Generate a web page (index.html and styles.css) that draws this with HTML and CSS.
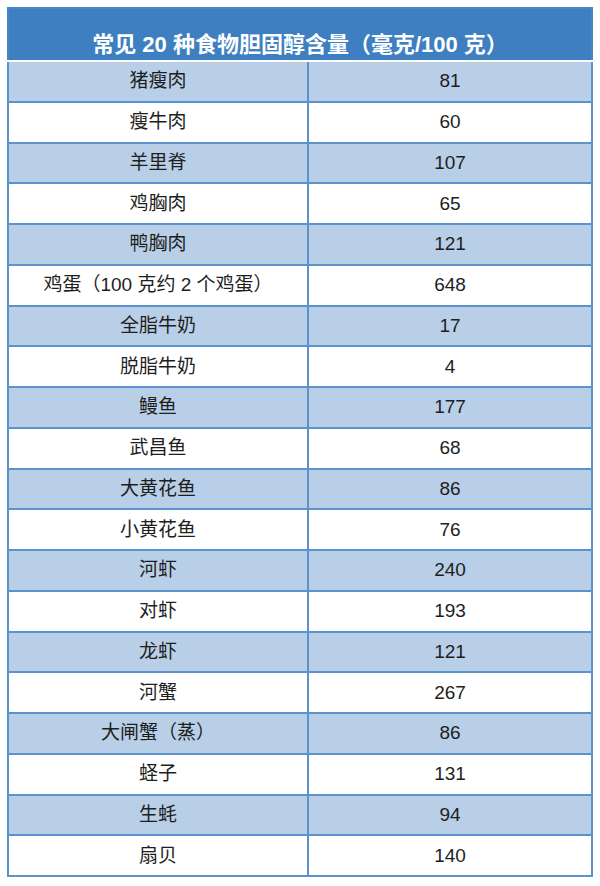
FILE: index.html
```html
<!DOCTYPE html>
<html lang="zh">
<head>
<meta charset="utf-8">
<link rel="stylesheet" href="styles.css">
</head>
<body>
<table class="tbl">
<colgroup><col class="col-name"><col class="col-val"></colgroup>
<thead>
<tr><th colspan="2" class="head">常见 20 种食物胆固醇含量（毫克/100 克）</th></tr>
</thead>
<tbody>
<tr class="alt"><td>猪瘦肉</td><td>81</td></tr>
<tr><td>瘦牛肉</td><td>60</td></tr>
<tr class="alt"><td>羊里脊</td><td>107</td></tr>
<tr><td>鸡胸肉</td><td>65</td></tr>
<tr class="alt"><td>鸭胸肉</td><td>121</td></tr>
<tr><td>鸡蛋（100 克约 2 个鸡蛋）</td><td>648</td></tr>
<tr class="alt"><td>全脂牛奶</td><td>17</td></tr>
<tr><td>脱脂牛奶</td><td>4</td></tr>
<tr class="alt"><td>鳗鱼</td><td>177</td></tr>
<tr><td>武昌鱼</td><td>68</td></tr>
<tr class="alt"><td>大黄花鱼</td><td>86</td></tr>
<tr><td>小黄花鱼</td><td>76</td></tr>
<tr class="alt"><td>河虾</td><td>240</td></tr>
<tr><td>对虾</td><td>193</td></tr>
<tr class="alt"><td>龙虾</td><td>121</td></tr>
<tr><td>河蟹</td><td>267</td></tr>
<tr class="alt"><td>大闸蟹（蒸）</td><td>86</td></tr>
<tr><td>蛏子</td><td>131</td></tr>
<tr class="alt"><td>生蚝</td><td>94</td></tr>
<tr><td>扇贝</td><td>140</td></tr>
</tbody>
</table>
</body>
</html>
```
FILE: styles.css
```css
html, body {
  margin: 0;
  padding: 0;
  background: #ffffff;
}
body {
  padding: 7px 0 0 7px;
  font-family: "Liberation Sans", "Noto Sans CJK SC", sans-serif;
}
.tbl {
  width: 584px;
  border-collapse: collapse;
  border: 2px solid #4a86c5;
  table-layout: fixed;
}
.col-name {
  width: 300px;
}
.col-val {
  width: 284px;
}
.head {
  background: #3d7fc1;
  color: #ffffff;
  font-weight: bold;
  font-size: 22px;
  line-height: 26px;
  height: 53px;
  padding: 20px 0 0 0;
  box-sizing: border-box;
  text-align: center;
  border-bottom: 2px solid #ffffff;
}
.tbl td {
  height: 40.75px;
  padding: 0;
  box-sizing: border-box;
  text-align: center;
  font-size: 19px;
  line-height: 24px;
  color: #1e1e1e;
  border: 2px solid #5b93cc;
}
.alt td {
  background: #b8cfe7;
}
```
